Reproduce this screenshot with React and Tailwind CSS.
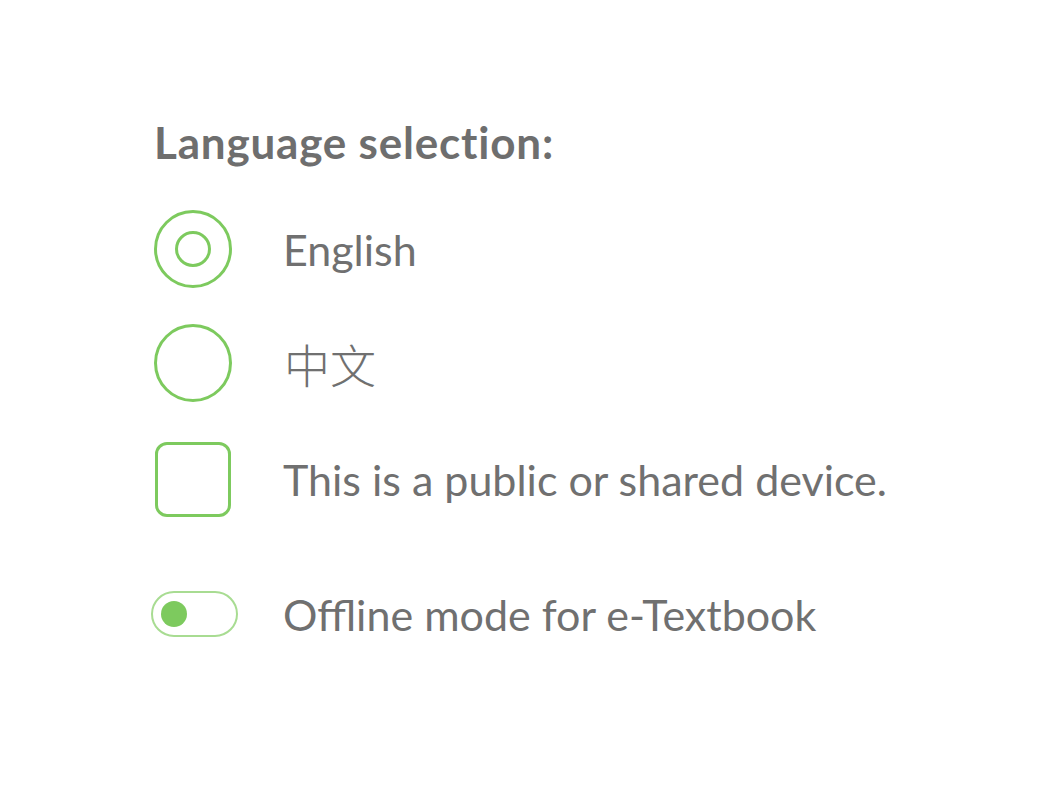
import React, { useState } from "react";

const Radio = ({ checked, onClick }) => (
	<button
		onClick={onClick}
		className="flex items-center justify-center w-[78px] h-[78px] rounded-full border-[3px] border-[#7dca5e] bg-white"
	>
		{checked && (
			<span className="block w-[36px] h-[36px] rounded-full border-[3px] border-[#7dca5e]"></span>
		)}
	</button>
);

const App = () => {
	const [lang, setLang] = useState("en");
	const [shared, setShared] = useState(false);
	const [offline, setOffline] = useState(false);

	return (
		<div
			className="w-[1060px] h-[798px] bg-white text-[#707070]"
			style={{ fontFamily: "Lato, 'Noto Sans CJK SC', sans-serif" }}
		>
			<div className="pl-[154px] pt-[116px]">
				<h1 className="text-[44px] leading-[52px] font-bold text-[#6e6e6e] tracking-[0.8px]">
					Language selection:
				</h1>
				<div className="flex flex-col mt-[42px]">
					<div className="flex items-center h-[78px]">
						<div className="w-[129px]">
							<Radio checked={lang === "en"} onClick={() => setLang("en")} />
						</div>
						<span className="text-[43px] leading-none">English</span>
					</div>
					<div className="flex items-center h-[78px] mt-[36px]">
						<div className="w-[130px]">
							<Radio checked={lang === "zh"} onClick={() => setLang("zh")} />
						</div>
						<span
							className="text-[46px] leading-none font-light"
							style={{ fontFamily: "'Noto Sans CJK SC', sans-serif" }}
						>
							中文
						</span>
					</div>
					<div className="flex items-center h-[76px] mt-[39px]">
						<div className="w-[129px]">
							<button
								onClick={() => setShared(!shared)}
								className="block ml-[1px] w-[76px] h-[75px] rounded-[12px] border-[3px] border-[#7dca5e] bg-white"
							></button>
						</div>
						<span className="text-[43px] leading-none">
							This is a public or shared device.
						</span>
					</div>
					<div className="flex items-center h-[46px] mt-[74px]">
						<div className="w-[129px]">
							<button
								onClick={() => setOffline(!offline)}
								className="relative block -ml-[3px] w-[87px] h-[46px] rounded-full border-2 border-[#a8dc92] bg-white"
							>
								<span
									className={`absolute top-1/2 -translate-y-1/2 w-[26px] h-[26px] rounded-full bg-[#7dca5e] ${
										offline ? "right-[8px]" : "left-[8px]"
									}`}
								></span>
							</button>
						</div>
						<span className="text-[43px] leading-none">Offline mode for e-Textbook</span>
					</div>
				</div>
			</div>
		</div>
	);
};

export default App;
